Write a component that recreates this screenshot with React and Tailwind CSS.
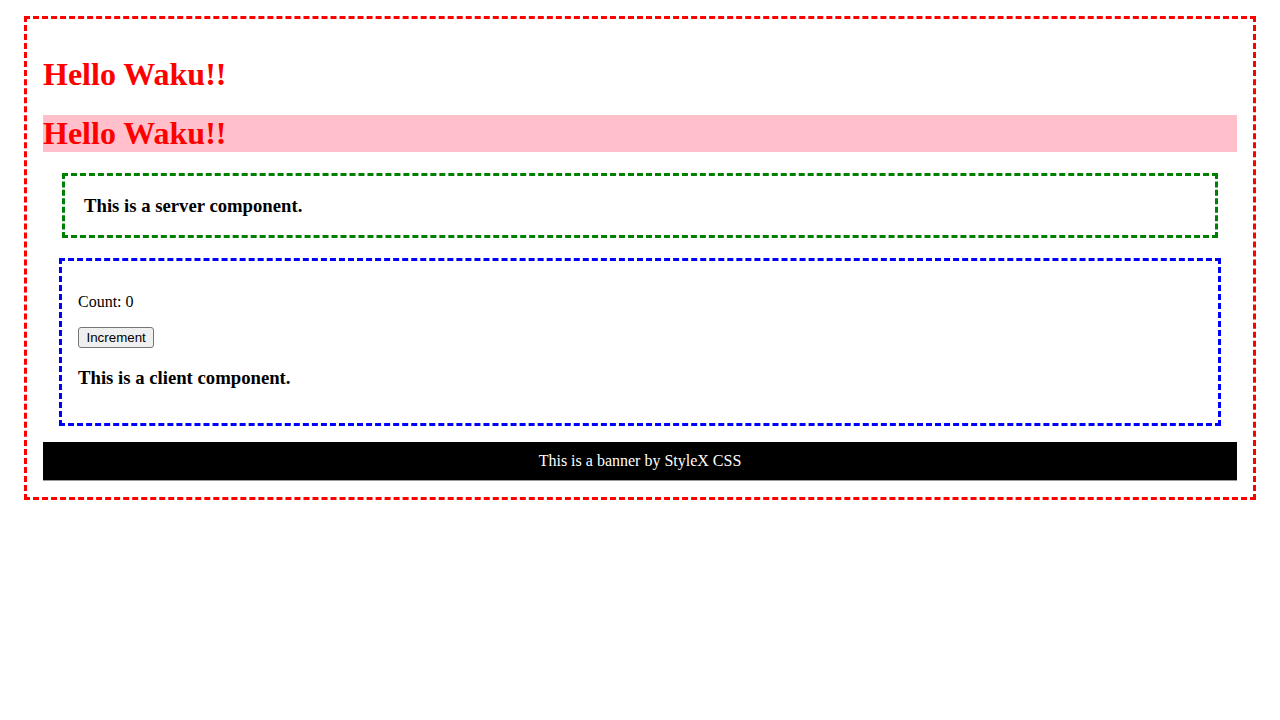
import React, { useState } from 'react';

const App = () => {
  const [count, setCount] = useState(0);

  return (
    <div className="mx-6 mt-4 border-[3px] border-dashed border-[#ff0000] p-4 font-['Liberation_Serif','Times_New_Roman',serif] leading-[normal] text-black">
      <div className="flex flex-col">
        <h1 className="mt-[21.44px] text-[32px] font-bold text-[#ff0000]">Hello Waku!!</h1>
        <h1 className="mt-[21.44px] bg-[pink] text-[32px] font-bold text-[#ff0000]">Hello Waku!!</h1>

        {/* Server component */}
        <div className="mx-[19px] mt-[21.44px] border-[3px] border-dashed border-[#008000] px-[19px] py-[18.5px]">
          <h3 className="text-[18.72px] font-bold">This is a server component.</h3>
        </div>

        {/* Client component */}
        <div className="mx-4 mt-5 border-[3px] border-dashed border-[#0000ff] p-4">
          <p className="mt-4 text-[16px]">Count: {count}</p>
          <div className="mt-4 flex">
            <button
              onClick={() => setCount((c) => c + 1)}
              className="rounded-[3px] border border-[#767676] bg-[#efefef] px-[7.5px] py-[2px] font-['Liberation_Sans',Arial,sans-serif] text-[13.33px] leading-[normal] text-black"
            >
              Increment
            </button>
          </div>
          <h3 className="mt-[18.72px] mb-[17.5px] text-[18.72px] font-bold">This is a client component.</h3>
        </div>

        <div className="mt-4 border-b border-[#999999] bg-black pt-[10px] pb-[10.5px] text-center text-[16px] text-white">
          This is a banner by StyleX CSS
        </div>
      </div>
    </div>
  );
};

export default App;
